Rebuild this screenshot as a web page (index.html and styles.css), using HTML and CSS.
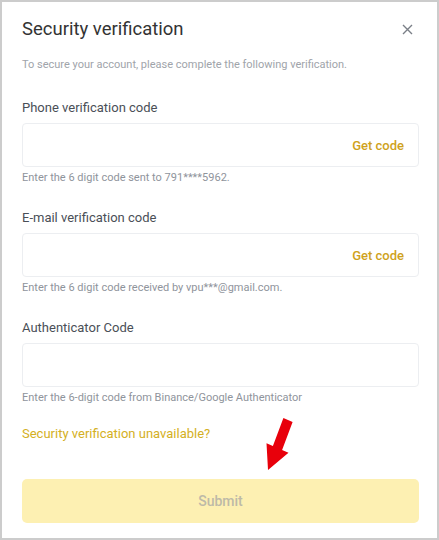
FILE: index.html
```html
<!DOCTYPE html>
<html lang="en">
<head>
  <meta charset="UTF-8">
  <meta name="viewport" content="width=device-width, initial-scale=1.0">
  <title>Security verification</title>
  <link rel="stylesheet" href="styles.css">
</head>
<body>
  <div class="modal">
    <div class="modal-head">
      <h1>Security verification</h1>
      <span class="close">
        <svg width="11" height="11" viewBox="0 0 11 11"><path d="M1 1L10 10M10 1L1 10" stroke="#7a7f87" stroke-width="1.4" fill="none"/></svg>
      </span>
    </div>
    <p class="intro">To secure your account, please complete the following verification.</p>

    <div class="field">
      <label>Phone verification code</label>
      <div class="input-box"><span class="get-code">Get code</span></div>
      <div class="hint">Enter the 6 digit code sent to 791****5962.</div>
    </div>

    <div class="field">
      <label>E-mail verification code</label>
      <div class="input-box"><span class="get-code">Get code</span></div>
      <div class="hint">Enter the 6 digit code received by vpu***@gmail.com.</div>
    </div>

    <div class="field">
      <label>Authenticator Code</label>
      <div class="input-box"></div>
      <div class="hint">Enter the 6-digit code from Binance/Google Authenticator</div>
    </div>

    <a class="unavailable" href="#">Security verification unavailable?</a>

    <button class="submit" disabled>Submit</button>

    <!-- red pointer on top of the screenshot -->
    <svg class="pointer" width="40" height="64" viewBox="0 0 40 64">
      <polygon points="23.4,6 32.6,10 22.1,38 28.5,40.7 8,58 6.5,31.3 12.9,34" fill="#e8000b"/>
    </svg>
  </div>
</body>
</html>
```

FILE: styles.css
```css
body {
  margin: 0;
  padding: 0;
  background-color: #ffffff;
  font-family: Roboto, "Liberation Sans", Arial, sans-serif;
}

.modal {
  position: relative;
  width: 439px;
  height: 540px;
  box-sizing: border-box;
  border: 2px solid #cccccc;
  padding: 0 18px 0 20px;
  display: flex;
  flex-direction: column;
}

.modal-head {
  display: flex;
  justify-content: space-between;
  align-items: center;
  height: 54px;
  padding-right: 3px;
}

h1 {
  margin: 0;
  font-size: 18.5px;
  font-weight: 400;
  color: #333333;
}

.close {
  display: flex;
  margin-right: 3px;
}

.intro {
  margin: 2px 0 0;
  font-size: 11px;
  color: #a0a4aa;
  line-height: 14px;
}

.field {
  margin-top: 28px;
}

.field + .field {
  margin-top: 25px;
}

label {
  display: block;
  font-size: 13px;
  color: #4a4f57;
  line-height: 16px;
}

.input-box {
  margin-top: 7px;
  height: 44px;
  box-sizing: border-box;
  border: 1px solid #eceef1;
  border-radius: 4px;
  display: flex;
  justify-content: flex-end;
  align-items: center;
  padding-right: 14px;
}

.get-code {
  font-size: 13px;
  font-weight: 500;
  color: #cfa21c;
}

.hint {
  margin-top: 4px;
  font-size: 11px;
  color: #8f949c;
  line-height: 14px;
}

.unavailable {
  margin-top: 21px;
  font-size: 13px;
  color: #d4b023;
  text-decoration: none;
  line-height: 16px;
}

.submit {
  margin-top: 37px;
  height: 44px;
  width: 100%;
  border: none;
  border-radius: 5px;
  background-color: #fdf0b2;
  color: #bdbaa8;
  font-family: inherit;
  font-size: 14px;
  font-weight: 500;
}

.pointer {
  position: absolute;
  left: 258px;
  top: 410px;
}
```
